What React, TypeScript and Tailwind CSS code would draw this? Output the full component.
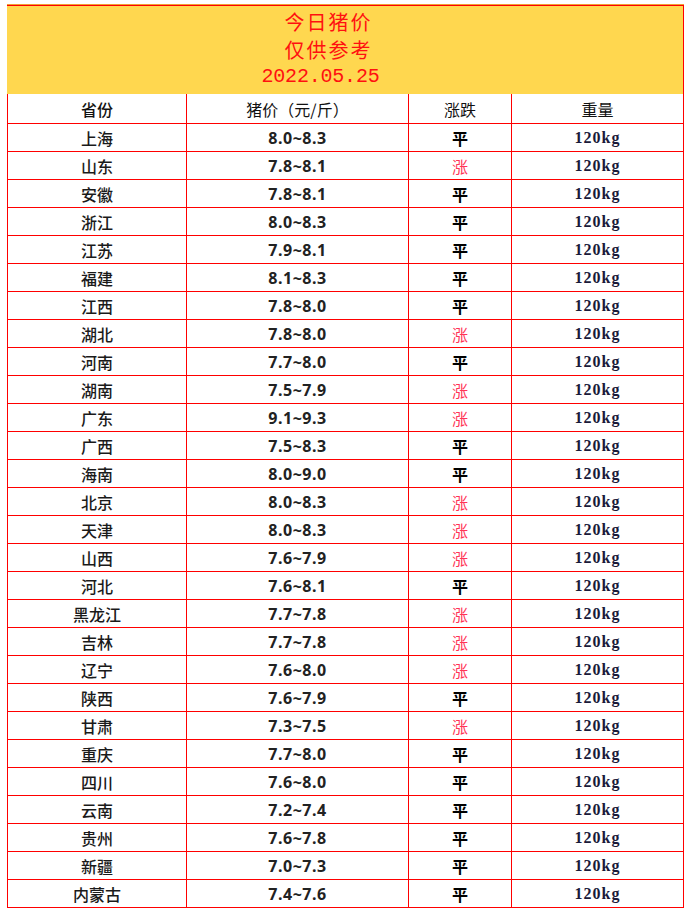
import React from "react";

const rows: [string, string, boolean][] = [
  ["上海", "8.0~8.3", false],
  ["山东", "7.8~8.1", true],
  ["安徽", "7.8~8.1", false],
  ["浙江", "8.0~8.3", false],
  ["江苏", "7.9~8.1", false],
  ["福建", "8.1~8.3", false],
  ["江西", "7.8~8.0", false],
  ["湖北", "7.8~8.0", true],
  ["河南", "7.7~8.0", false],
  ["湖南", "7.5~7.9", true],
  ["广东", "9.1~9.3", true],
  ["广西", "7.5~8.3", false],
  ["海南", "8.0~9.0", false],
  ["北京", "8.0~8.3", true],
  ["天津", "8.0~8.3", true],
  ["山西", "7.6~7.9", true],
  ["河北", "7.6~8.1", false],
  ["黑龙江", "7.7~7.8", true],
  ["吉林", "7.7~7.8", true],
  ["辽宁", "7.6~8.0", true],
  ["陕西", "7.6~7.9", false],
  ["甘肃", "7.3~7.5", true],
  ["重庆", "7.7~8.0", false],
  ["四川", "7.6~8.0", false],
  ["云南", "7.2~7.4", false],
  ["贵州", "7.6~7.8", false],
  ["新疆", "7.0~7.3", false],
  ["内蒙古", "7.4~7.6", false],
];

const cjk = "font-['Noto_Sans_CJK_SC',sans-serif]";

export default function App() {
  return (
    <div className="w-[690px] h-[917px] bg-white pt-[4px] pl-[7px]">
      <div className="w-[677px] border-t border-[#f0a030]">
        <div className="h-[89px] bg-[#ffd74f] border-t border-r border-[#ff0000] flex flex-col items-center justify-center pr-[33px] pb-[2px] text-[#ff1010]">
          <div className={`${cjk} text-[20px] leading-[28px] tracking-[2px]`}>今日猪价</div>
          <div className={`${cjk} text-[20px] leading-[28px] tracking-[2px]`}>仅供参考</div>
          <div className="font-['Liberation_Mono',monospace] text-[20px] leading-[26px] mr-[16px] tracking-[-0.2px]">2022.05.25</div>
        </div>
        <div className="border-l border-r border-[#ff0000]">
          <div className="grid grid-cols-[179px_222px_103px_171px] h-[30px] border-b border-[#ff0000] text-[16px] text-[#111]">
            <div className={`${cjk} font-medium border-r border-[#ff0000] flex items-center justify-center`}>省份</div>
            <div className={`${cjk} border-r border-[#ff0000] flex items-center justify-center`}>猪价（元/斤）</div>
            <div className={`${cjk} border-r border-[#ff0000] flex items-center justify-center`}>涨跌</div>
            <div className={`${cjk} flex items-center justify-center`}>重量</div>
          </div>
          {rows.map(([p, price, up]) => (
            <div
              key={p}
              className="grid grid-cols-[179px_222px_103px_171px] h-[28px] border-b border-[#ff0000]"
            >
              <div className={`${cjk} font-medium text-[16px] text-[#1a1a1a] border-r border-[#ff0000] flex items-center justify-center`}>
                {p}
              </div>
              <div className="font-['Noto_Sans',sans-serif] font-bold text-[16px] tracking-[0.5px] text-[#222] border-r border-[#ff0000] flex items-center justify-center">
                {price}
              </div>
              <div
                className={`${cjk} text-[16px] border-r border-[#ff0000] flex items-center justify-center ${
                  up ? "text-[#ff3355]" : "text-black font-bold"
                }`}
              >
                {up ? "涨" : "平"}
              </div>
              <div className="font-['Liberation_Serif',serif] font-bold text-[16px] tracking-[1px] text-[#1a1a3a] flex items-center justify-center">
                120kg
              </div>
            </div>
          ))}
        </div>
      </div>
    </div>
  );
}
